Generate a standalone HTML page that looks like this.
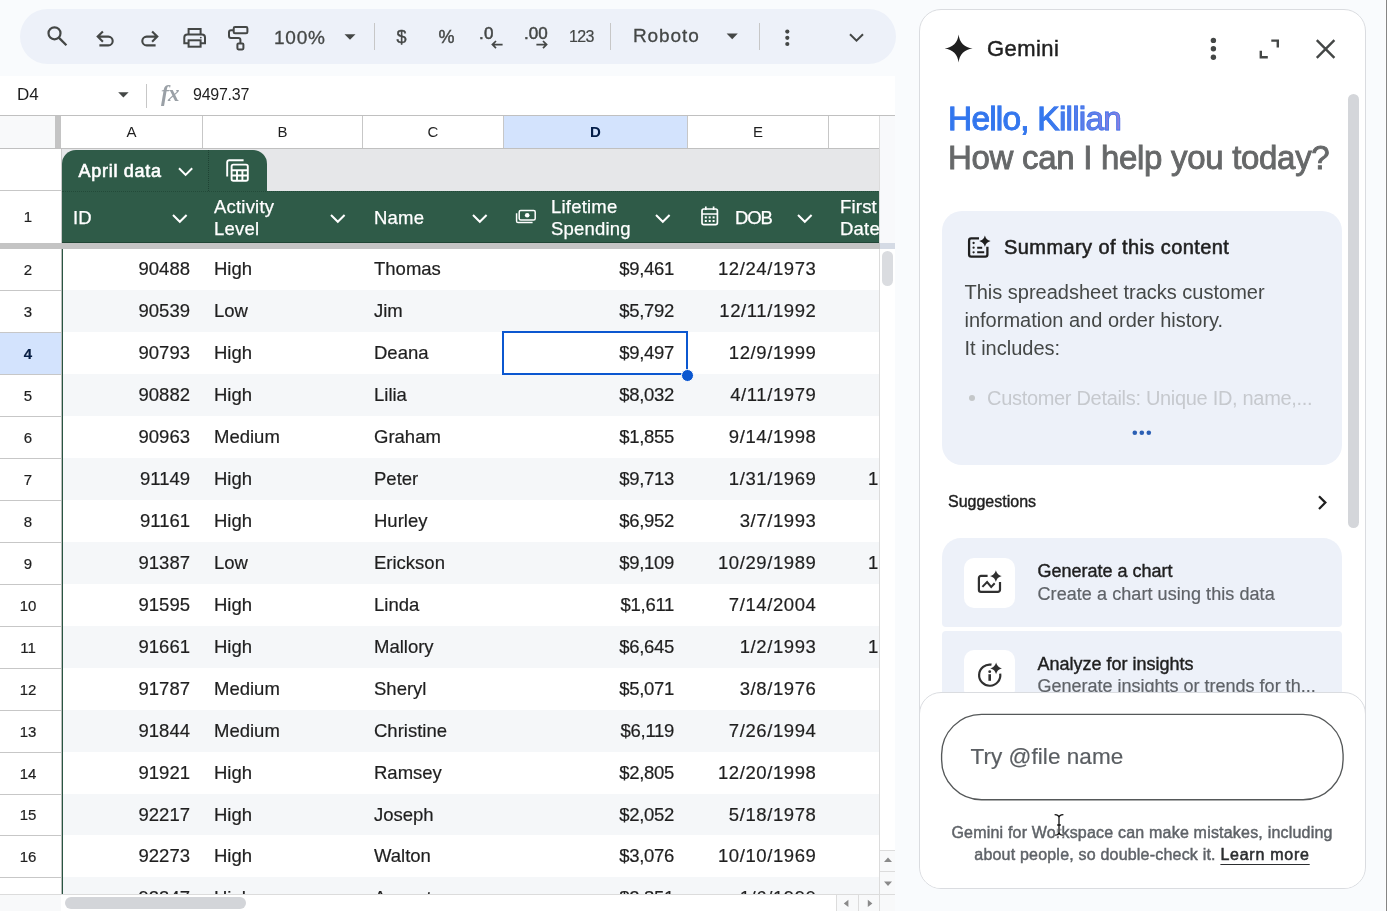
<!DOCTYPE html>
<html>
<head>
<meta charset="utf-8">
<title>Sheets</title>
<style>
*{box-sizing:border-box;margin:0;padding:0}
html,body{width:1387px;height:911px;overflow:hidden;background:#f9fbfd;font-family:"Liberation Sans",sans-serif;color:#1f1f1f}
.abs{position:absolute}
#root{position:relative;width:1387px;height:911px;overflow:hidden;will-change:transform}
/* toolbar */
#tb{left:20px;top:9px;width:876px;height:55px;border-radius:28px;background:#edf1f9}
.tbt{position:absolute;color:#444746;white-space:nowrap}
.sep{position:absolute;width:1px;background:#c7c7c7;top:22.5px;height:27px}
/* formula bar */
#fb{left:0;top:76px;width:895px;height:39px;background:#fff}
/* grid */
#grid{left:0;top:115px;width:895px;height:796px;background:#fff;overflow:hidden}
.ch{position:absolute;top:1px;height:32px;background:#fff;border-right:1px solid #c7c7c7;font-size:15px;line-height:32px;text-align:center;color:#1f1f1f}
.rh{position:absolute;left:0;width:61px;padding-right:5px;height:42px;border-bottom:1px solid #c7c7c7;background:#fff;font-size:15px;text-align:center;line-height:41px;color:#1f1f1f;-webkit-text-stroke:0.2px #1f1f1f}
.row{position:absolute;left:63px;width:816px;height:42px;font-size:18.5px;-webkit-text-stroke:0.2px #1f1f1f;line-height:42px;color:#1f1f1f}
.row.b{background:#f5f7f9}
.row span{position:absolute;top:0;white-space:nowrap}
.cA{right:689px}
.cB{left:151px}
.cC{left:311px}
.cD{right:205px;letter-spacing:-0.3px}
.cE{right:62.5px;letter-spacing:0.6px}
.cF{left:805px}
.hd{position:absolute;color:#fff;font-size:18.5px;line-height:22px;white-space:nowrap;letter-spacing:0.2px;-webkit-text-stroke:0.25px #fff;margin-top:1px}
/* gemini */
#gem{left:919px;top:9px;width:447px;height:880px;border:1px solid #dadce0;border-radius:22px;background:#fff;overflow:hidden}
.card{position:absolute;left:22px;width:400px;background:#edf1f9}
</style>
</head>
<body>
<div id="root">

<!-- TOOLBAR -->
<div id="tb" class="abs"></div>
<svg class="abs" style="left:0;top:0" width="900" height="70" viewBox="0 0 900 70" fill="none" stroke="#444746" stroke-width="2" stroke-linecap="butt" stroke-linejoin="miter">
  <!-- search -->
  <circle cx="54.5" cy="33.3" r="6.0" stroke-width="2.2"/>
  <path d="M58.8 37.6 L66.4 45.2" stroke-width="2.3"/>
  <!-- undo -->
  <path d="M102.9 31.4 L97.7 36.6 L102.9 41.8 M98.2 36.6 H108.3 a4.4 4.4 0 0 1 0 8.800 H99.4" stroke-width="2.1"/>
  <!-- redo -->
  <path d="M152.100 31.400 L157.300 36.600 L152.100 41.800 M156.800 36.600 H146.700 a4.400 4.400 0 0 0 0 8.800 H155.600" stroke-width="2.1"/>
  <!-- print -->
  <path d="M188.6 34.5 V29 H200.6 V34.5" />
  <path d="M188.6 43.3 H184.3 V37.5 a3 3 0 0 1 3 -3 H202 a3 3 0 0 1 3 3 V43.3 H200.6" />
  <rect x="188.6" y="40.3" width="12" height="6.4"/>
  <circle cx="200.8" cy="37.6" r="0.9" fill="#444746" stroke="none"/>
  <!-- paint format -->
  <rect x="233.700" y="27.100" width="13.700" height="6.200" rx="1.300"/>
  <path d="M233.700 30.200 H231 a2 2 0 0 0 -2 2 V36 a2 2 0 0 0 2 2 H238.4 a2 2 0 0 1 2 2 V43"/>
  <rect x="237.400" y="43.400" width="6" height="6" rx="1.100"/>
  <!-- zoom dropdown tri -->
  <path d="M344.5 34.3 H355.5 L350 39.8 Z" fill="#444746" stroke="none"/>
  <!-- decimal arrows -->
  <path d="M502.6 44.6 H492.4 M496 41 L492.4 44.6 L496 48.2" stroke-width="1.7"/>
  <path d="M536.4 44.6 H546.6 M543 41 L546.6 44.6 L543 48.2" stroke-width="1.7"/>
  <!-- font dropdown tri -->
  <path d="M726.6 33.6 H737.8 L732.2 39.2 Z" fill="#444746" stroke="none"/>
  <!-- more -->
  <circle cx="787.3" cy="31.6" r="2.1" fill="#444746" stroke="none"/>
  <circle cx="787.3" cy="37.8" r="2.1" fill="#444746" stroke="none"/>
  <circle cx="787.3" cy="44" r="2.1" fill="#444746" stroke="none"/>
  <!-- chevron -->
  <path d="M850 34.2 L856.5 40.7 L863 34.2" stroke-width="2"/>
</svg>
<div class="sep" style="left:374px"></div>
<div class="sep" style="left:610px"></div>
<div class="sep" style="left:759px"></div>
<div class="tbt" style="left:274px;top:26.300px;font-size:19px;line-height:24px;letter-spacing:0.8px;-webkit-text-stroke:0.3px #444746">100%</div>
<div class="tbt" style="left:396.5px;top:25px;font-size:18px;line-height:24px;-webkit-text-stroke:0.4px #444746">$</div>
<div class="tbt" style="left:438.500px;top:25px;font-size:18px;line-height:24px;-webkit-text-stroke:0.4px #444746">%</div>
<div class="tbt" style="left:479px;top:22px;font-size:17px;line-height:24px;-webkit-text-stroke:0.5px #444746;letter-spacing:0.3px">.0</div>
<div class="tbt" style="left:524px;top:22px;font-size:17px;line-height:24px;-webkit-text-stroke:0.5px #444746;letter-spacing:0px">.00</div>
<div class="tbt" style="left:569px;top:25px;font-size:16px;line-height:24px;letter-spacing:-0.6px;-webkit-text-stroke:0.2px #444746">123</div>
<div class="tbt" style="left:633px;top:24.4px;font-size:19px;line-height:24px;letter-spacing:0.9px;-webkit-text-stroke:0.3px #444746">Roboto</div>

<!-- FORMULA BAR -->
<div id="fb" class="abs">
  <div class="abs" style="left:17px;top:8px;font-size:17px;line-height:22px;color:#1f1f1f">D4</div>
  <svg class="abs" style="left:116px;top:14px" width="16" height="12" viewBox="0 0 16 12"><path d="M2.2 2.2 H12.6 L7.4 7.6 Z" fill="#444746"/></svg>
  <div class="abs" style="left:146px;top:8px;width:1px;height:24px;background:#c7c7c7"></div>
  <div class="abs" style="left:161px;top:5px;font-family:'Liberation Serif',serif;font-style:italic;font-size:23px;line-height:26px;color:#9aa0a6;letter-spacing:-0.6px;font-weight:bold">fx</div>
  <div class="abs" style="left:193px;top:8px;font-size:16px;line-height:22px;color:#1f1f1f;letter-spacing:-0.25px">9497.37</div>
</div>

<!-- GRID -->
<div id="grid" class="abs">
<div class="abs" style="left:0;top:0;width:895px;height:1px;background:#c0c0c0"></div>
<div class="abs" style="left:0;top:1px;width:55px;height:32px;background:#f8f9fa"></div>
<div class="abs" style="left:55px;top:1px;width:6px;height:33px;background:#c4c4c4"></div>
<div class="ch" style="left:61px;width:142px;">A</div>
<div class="ch" style="left:203px;width:160px;">B</div>
<div class="ch" style="left:363px;width:141px;">C</div>
<div class="ch" style="left:504px;width:184px;background:#d3e3fd;font-weight:bold;color:#041e49;">D</div>
<div class="ch" style="left:688px;width:141px;">E</div>
<div class="ch" style="left:829px;width:51px;"></div>
<div class="abs" style="left:0;top:33px;width:880px;height:1px;background:#c0c0c0"></div>
<div class="abs" style="left:0;top:34px;width:61px;height:42px;background:#fff;border-bottom:1px solid #c7c7c7"></div>
<div class="abs" style="left:61px;top:34px;width:819px;height:42px;background:#e6e7e9"></div>
<div class="abs" style="left:60.5px;top:34px;width:1px;height:94px;background:#c9c9c9"></div>
<div class="abs" style="left:62px;top:35px;width:205px;height:41px;background:#2f5b48;border-radius:14px 14px 0 0"></div>
<div class="abs" style="left:208px;top:35px;width:0;height:41px;border-left:1px dotted #1f4233"></div>
<div class="abs" style="left:78.5px;top:44px;font-size:18px;line-height:22px;color:#fff;letter-spacing:0.72px;-webkit-text-stroke:0.6px #fff;margin-top:1px;white-space:nowrap">April data</div>
<svg class="abs" style="left:176px;top:50px" width="20" height="14" viewBox="0 0 20 14" fill="none" stroke="#fff" stroke-width="2"><path d="M3 3.3 L9.6 9.9 L16.2 3.3"/></svg>
<svg class="abs" style="left:224px;top:42px" width="28" height="28" viewBox="0 0 28 28" fill="none" stroke="#fff" stroke-width="1.9">
<path d="M3.2 19.5 V5.2 a2 2 0 0 1 2 -2 H19.6"/>
<rect x="7.6" y="7.6" width="16.2" height="16.2" rx="1.8"/>
<path d="M7.6 13.2 H23.8 M7.6 18.5 H23.8 M13 13.2 V23.8 M18.4 13.2 V23.8"/>
</svg>
<div class="rh" style="top:76px;height:52px;line-height:51px;border-bottom:none">1</div>
<div class="abs" style="left:62px;top:75.5px;width:818px;height:52.5px;background:#2f5b48;border-bottom:1px solid #214535"></div>
<div class="abs" style="left:62px;top:75.5px;width:818px;height:0;border-top:1px dotted #234a39"></div>
<div class="hd" style="left:73px;top:91px">ID</div>
<svg class="abs" style="left:169.5px;top:96.5px" width="20" height="14" viewBox="0 0 20 14" fill="none" stroke="#fff" stroke-width="2"><path d="M3 3 L9.8 9.8 L16.6 3"/></svg>
<div class="hd" style="left:214px;top:80px">Activity<br>Level</div>
<svg class="abs" style="left:328px;top:96.5px" width="20" height="14" viewBox="0 0 20 14" fill="none" stroke="#fff" stroke-width="2"><path d="M3 3 L9.8 9.8 L16.6 3"/></svg>
<div class="hd" style="left:374px;top:91px">Name</div>
<svg class="abs" style="left:470px;top:96.5px" width="20" height="14" viewBox="0 0 20 14" fill="none" stroke="#fff" stroke-width="2"><path d="M3 3 L9.8 9.8 L16.6 3"/></svg>
<div class="hd" style="left:551px;top:80px">Lifetime<br>Spending</div>
<svg class="abs" style="left:653px;top:96.5px" width="20" height="14" viewBox="0 0 20 14" fill="none" stroke="#fff" stroke-width="2"><path d="M3 3 L9.8 9.8 L16.6 3"/></svg>
<div class="hd" style="left:735px;top:91px;letter-spacing:-1.1px">DOB</div>
<svg class="abs" style="left:794.5px;top:96.5px" width="20" height="14" viewBox="0 0 20 14" fill="none" stroke="#fff" stroke-width="2"><path d="M3 3 L9.8 9.8 L16.6 3"/></svg>
<div class="hd" style="left:840px;top:80px;width:40px;overflow:hidden">First<br>Date</div>
<svg class="abs" style="left:514px;top:92px" width="24" height="20" viewBox="0 0 24 20" fill="none" stroke="#fff" stroke-width="1.5">
<rect x="5.2" y="3.6" width="16" height="9.4" rx="1.5"/><circle cx="13.2" cy="8.3" r="2.3" fill="#fff" stroke="none"/>
<path d="M2.6 6.2 V14.2 a1.4 1.4 0 0 0 1.4 1.4 H18.6"/></svg>
<svg class="abs" style="left:699px;top:89px" width="22" height="24" viewBox="0 0 22 24" fill="none" stroke="#fff" stroke-width="1.7">
<rect x="3" y="5" width="15.4" height="15.6" rx="1.8"/><path d="M3 10 H18.4 M6.8 2.6 V6 M14.6 2.6 V6"/>
<g fill="#fff" stroke="none"><rect x="5.8" y="12.4" width="2" height="2"/><rect x="9.7" y="12.4" width="2" height="2"/><rect x="13.6" y="12.4" width="2" height="2"/><rect x="5.8" y="16" width="2" height="2"/><rect x="9.7" y="16" width="2" height="2"/><rect x="13.6" y="16" width="2" height="2"/></g></svg>
<div class="abs" style="left:0;top:128px;width:880px;height:6px;background:#c4c4c4"></div>
<div class="abs" style="left:880px;top:1px;width:16px;height:127px;background:#f8f9fb"></div><div class="abs" style="left:879px;top:1px;width:1px;height:127px;background:#dcdcdc"></div><div class="abs" style="left:880px;top:128px;width:16px;height:6px;background:#d5dbe5"></div>
<div class="rh" style="top:134px;height:42px;line-height:41px;">2</div>
<div class="row" style="top:133px;height:42px;line-height:42px"><span class="cA">90488</span><span class="cB">High</span><span class="cC">Thomas</span><span class="cD">$9,461</span><span class="cE">12/24/1973</span><span class="cF"></span></div>
<div class="rh" style="top:176px;height:42px;line-height:41px;">3</div>
<div class="row b" style="top:175px;height:42px;line-height:42px"><span class="cA">90539</span><span class="cB">Low</span><span class="cC">Jim</span><span class="cD">$5,792</span><span class="cE">12/11/1992</span><span class="cF"></span></div>
<div class="rh" style="top:218px;height:42px;line-height:41px;background:#d3e3fd;font-weight:bold;color:#041e49;">4</div>
<div class="row" style="top:217px;height:42px;line-height:42px"><span class="cA">90793</span><span class="cB">High</span><span class="cC">Deana</span><span class="cD">$9,497</span><span class="cE">12/9/1999</span><span class="cF"></span></div>
<div class="rh" style="top:260px;height:42px;line-height:41px;">5</div>
<div class="row b" style="top:259px;height:42px;line-height:42px"><span class="cA">90882</span><span class="cB">High</span><span class="cC">Lilia</span><span class="cD">$8,032</span><span class="cE">4/11/1979</span><span class="cF"></span></div>
<div class="rh" style="top:302px;height:42px;line-height:41px;">6</div>
<div class="row" style="top:301px;height:42px;line-height:42px"><span class="cA">90963</span><span class="cB">Medium</span><span class="cC">Graham</span><span class="cD">$1,855</span><span class="cE">9/14/1998</span><span class="cF"></span></div>
<div class="rh" style="top:344px;height:42px;line-height:41px;">7</div>
<div class="row b" style="top:343px;height:42px;line-height:42px"><span class="cA">91149</span><span class="cB">High</span><span class="cC">Peter</span><span class="cD">$9,713</span><span class="cE">1/31/1969</span><span class="cF">1</span></div>
<div class="rh" style="top:386px;height:42px;line-height:41px;">8</div>
<div class="row" style="top:385px;height:42px;line-height:42px"><span class="cA">91161</span><span class="cB">High</span><span class="cC">Hurley</span><span class="cD">$6,952</span><span class="cE">3/7/1993</span><span class="cF"></span></div>
<div class="rh" style="top:428px;height:42px;line-height:41px;">9</div>
<div class="row b" style="top:427px;height:42px;line-height:42px"><span class="cA">91387</span><span class="cB">Low</span><span class="cC">Erickson</span><span class="cD">$9,109</span><span class="cE">10/29/1989</span><span class="cF">1</span></div>
<div class="rh" style="top:470px;height:42px;line-height:41px;">10</div>
<div class="row" style="top:469px;height:42px;line-height:42px"><span class="cA">91595</span><span class="cB">High</span><span class="cC">Linda</span><span class="cD">$1,611</span><span class="cE">7/14/2004</span><span class="cF"></span></div>
<div class="rh" style="top:512px;height:42px;line-height:41px;">11</div>
<div class="row b" style="top:511px;height:42px;line-height:42px"><span class="cA">91661</span><span class="cB">High</span><span class="cC">Mallory</span><span class="cD">$6,645</span><span class="cE">1/2/1993</span><span class="cF">1</span></div>
<div class="rh" style="top:554px;height:42px;line-height:41px;">12</div>
<div class="row" style="top:553px;height:42px;line-height:42px"><span class="cA">91787</span><span class="cB">Medium</span><span class="cC">Sheryl</span><span class="cD">$5,071</span><span class="cE">3/8/1976</span><span class="cF"></span></div>
<div class="rh" style="top:596px;height:42px;line-height:41px;">13</div>
<div class="row b" style="top:595px;height:42px;line-height:42px"><span class="cA">91844</span><span class="cB">Medium</span><span class="cC">Christine</span><span class="cD">$6,119</span><span class="cE">7/26/1994</span><span class="cF"></span></div>
<div class="rh" style="top:638px;height:42px;line-height:41px;">14</div>
<div class="row" style="top:637px;height:42px;line-height:42px"><span class="cA">91921</span><span class="cB">High</span><span class="cC">Ramsey</span><span class="cD">$2,805</span><span class="cE">12/20/1998</span><span class="cF"></span></div>
<div class="rh" style="top:680px;height:41px;line-height:40px;">15</div>
<div class="row b" style="top:679px;height:41px;line-height:41px"><span class="cA">92217</span><span class="cB">High</span><span class="cC">Joseph</span><span class="cD">$2,052</span><span class="cE">5/18/1978</span><span class="cF"></span></div>
<div class="rh" style="top:721px;height:42px;line-height:41px;">16</div>
<div class="row" style="top:720px;height:42px;line-height:42px"><span class="cA">92273</span><span class="cB">High</span><span class="cC">Walton</span><span class="cD">$3,076</span><span class="cE">10/10/1969</span><span class="cF"></span></div>
<div class="rh" style="top:763px;height:42px;line-height:41px;">17</div>
<div class="row b" style="top:762px;height:42px;line-height:42px"><span class="cA">92347</span><span class="cB">High</span><span class="cC">Augustus</span><span class="cD">$2,851</span><span class="cE">1/6/1990</span><span class="cF"></span></div>
<div class="abs" style="left:62px;top:134px;width:1px;height:650px;background:#2a5542"></div>
<div class="abs" style="left:61px;top:134px;width:1px;height:650px;background:#b9bcbb"></div>
<div class="abs" style="left:502px;top:216px;width:186px;height:44px;border:2px solid #0b57d0"></div>
<div class="abs" style="left:681px;top:253.5px;width:13px;height:13px;border-radius:50%;background:#0b57d0;border:1px solid #fff"></div>
<div class="abs" style="left:879px;top:134px;width:17px;height:646px;background:#fff;border-left:1px solid #dcdcdc"></div>
<div class="abs" style="left:882px;top:136px;width:11px;height:35px;border-radius:5.5px;background:#dadce0"></div>
<div class="abs" style="left:880px;top:735px;width:16px;height:45px;background:#f8f9fa;border-top:1px solid #dcdcdc"></div>
<div class="abs" style="left:880px;top:756px;width:16px;height:1px;background:#dcdcdc"></div>
<svg class="abs" style="left:880px;top:736px" width="16" height="44" viewBox="0 0 16 44"><path d="M4 11 L8 6.6 L12 11 Z M4 30.6 L12 30.6 L8 35 Z" fill="#8a8a8a"/></svg>
<div class="abs" style="left:0;top:779px;width:896px;height:17px;background:#fff;border-top:1px solid #dcdcdc"></div>
<div class="abs" style="left:0;top:780px;width:61px;height:16px;background:#f8f9fa"></div>
<div class="abs" style="left:65px;top:782px;width:181px;height:12px;border-radius:6px;background:#d3d5d9"></div>
<div class="abs" style="left:836px;top:780px;width:44px;height:16px;background:#f8f9fa;border-left:1px solid #dcdcdc;border-right:1px solid #dcdcdc"></div>
<div class="abs" style="left:858px;top:780px;width:1px;height:16px;background:#dcdcdc"></div>
<svg class="abs" style="left:836px;top:780px" width="44" height="16" viewBox="0 0 44 16"><path d="M12.4 4.8 L7.8 8.4 L12.4 12 Z M31.8 4.8 L36.4 8.4 L31.8 12 Z" fill="#8a8a8a"/></svg>
<div class="abs" style="left:880px;top:780px;width:16px;height:16px;background:#f8f9fa"></div>
</div>

<!-- GEMINI -->
<div id="gem" class="abs">
<div class="abs" id="gi" style="left:-920px;top:-10px;width:1387px;height:911px">
  <!-- header -->
  <svg class="abs" style="left:944px;top:34px" width="30" height="30" viewBox="0 0 30 30"><path d="M14.6 0.6 C15.4 8.6 20.6 13.8 28.6 14.6 C20.6 15.4 15.4 20.6 14.6 28.6 C13.8 20.6 8.6 15.4 0.6 14.6 C8.6 13.8 13.8 8.6 14.6 0.6 Z" fill="#1f1f1f"/></svg>
  <div class="abs" style="left:987px;top:35px;font-size:22px;line-height:28px;color:#1f1f1f;letter-spacing:0.45px;-webkit-text-stroke:0.45px #1f1f1f">Gemini</div>
  <svg class="abs" style="left:1200px;top:30px" width="150" height="40" viewBox="1200 30 150 40" fill="none" stroke="#444746" stroke-width="2.4">
    <circle cx="1213.4" cy="40.4" r="2.7" fill="#444746" stroke="none"/>
    <circle cx="1213.4" cy="48.8" r="2.7" fill="#444746" stroke="none"/>
    <circle cx="1213.4" cy="57.2" r="2.7" fill="#444746" stroke="none"/>
    <path d="M1271.3 40.6 H1277.8 V47.5 M1260.8 50.7 V57.3 H1267.8"/>
    <path d="M1316.8 40.2 L1334.4 57.8 M1334.4 40.2 L1316.8 57.8"/>
  </svg>
  <!-- scrollbar -->
  <div class="abs" style="left:1348px;top:94px;width:11px;height:434px;border-radius:5.5px;background:#d4d6da"></div>
  <!-- greeting -->
  <div class="abs" id="hello" style="left:948px;top:98px;font-size:33.5px;line-height:42px;letter-spacing:-0.8px;white-space:nowrap;background:linear-gradient(90deg,#3076ee 0%,#3478ee 58%,#8c7fe0 100%);-webkit-background-clap:text;-webkit-background-clip:text;background-clip:text;color:transparent;-webkit-text-stroke:0.9px rgba(58,120,238,0.8)">Hello, Killian</div>
  <div class="abs" id="how" style="left:948px;top:137px;font-size:33px;line-height:42px;letter-spacing:-0.3px;white-space:nowrap;color:#666869;-webkit-text-stroke:0.9px #666869">How can I help you today?</div>
  <!-- summary card -->
  <div class="abs" style="left:942px;top:211px;width:400px;height:254px;border-radius:20px;background:#edf1f9"></div>
  <svg class="abs" style="left:960px;top:228px" width="40" height="40" viewBox="960 228 40 40" fill="none" stroke="#1f1f1f" stroke-width="2.3">
    <path d="M979 238.4 H971.2 a2.1 2.1 0 0 0 -2.100 2.100 V254.600 a2.100 2.100 0 0 0 2.100 2.100 H985.300 a2.100 2.100 0 0 0 2.100 -2.100 V246.800"/>
    <path d="M977.200 247.700 H982.200 M977.200 252.300 H984.200" stroke-width="2"/>
    <g fill="#1f1f1f" stroke="none"><circle cx="973.600" cy="243" r="1.150"/><circle cx="973.600" cy="247.700" r="1.150"/><circle cx="973.600" cy="252.300" r="1.150"/>
    <path d="M984.90 235.40 C985.98 238.72 987.28 240.02 990.60 241.10 C987.28 242.18 985.98 243.48 984.90 246.80 C983.82 243.48 982.52 242.18 979.20 241.10 C982.52 240.02 983.82 238.72 984.90 235.40 Z"/></g>
  </svg>
  <div class="abs" id="sumt" style="left:1004px;top:234px;font-size:20px;line-height:26px;color:#1f1f1f;white-space:nowrap;letter-spacing:0.42px;-webkit-text-stroke:0.55px #1f1f1f">Summary of this content</div>
  <div class="abs" id="sumb" style="left:964.5px;top:278px;font-size:20px;line-height:28px;color:#444746;white-space:nowrap">This spreadsheet tracks customer<br>information and order history.<br>It includes:</div>
  <div class="abs" style="left:969px;top:395.4px;width:6px;height:6px;border-radius:50%;background:#c4c7c9"></div>
  <div class="abs" id="bul" style="left:987px;top:384px;font-size:20px;line-height:28px;color:#c6c9ce;white-space:nowrap;letter-spacing:-0.31px">Customer Details: Unique ID, name,...</div>
  <svg class="abs" style="left:1128px;top:426px" width="28" height="14" viewBox="0 0 28 14"><circle cx="6.8" cy="6.8" r="2.3" fill="#2b5fb4"/><circle cx="13.8" cy="6.8" r="2.3" fill="#2b5fb4"/><circle cx="20.8" cy="6.8" r="2.3" fill="#2b5fb4"/></svg>
  <!-- suggestions -->
  <div class="abs" id="sugg" style="left:948px;top:491px;font-size:16px;line-height:22px;color:#1f1f1f;white-space:nowrap;-webkit-text-stroke:0.4px #1f1f1f">Suggestions</div>
  <svg class="abs" style="left:1312px;top:492px" width="20" height="22" viewBox="0 0 20 22" fill="none" stroke="#1f1f1f" stroke-width="2.2"><path d="M7 4.2 L13.4 10.6 L7 17"/></svg>
  <!-- suggestion cards -->
  <div class="abs" style="left:942px;top:538px;width:400px;height:89px;border-radius:19px 19px 4px 4px;background:#edf1f9"></div>
  <div class="abs" style="left:942px;top:630.500px;width:400px;height:88.500px;border-radius:4px;background:#edf1f9"></div>
  <div class="abs" style="left:964px;top:557.700px;width:50.700px;height:50px;border-radius:10px;background:#fff"></div>
  <div class="abs" style="left:964px;top:650px;width:50.700px;height:50px;border-radius:10px;background:#fff"></div>
  <svg class="abs" style="left:970px;top:562px" width="40" height="40" viewBox="970 562 40 40" fill="none" stroke="#303030" stroke-width="2.2">
    <path d="M987.600 575.900 H981 a2.100 2.100 0 0 0 -2.100 2.100 V589.800 a2.100 2.100 0 0 0 2.100 2.100 H997.900 a2.100 2.100 0 0 0 2.100 -2.100 V582"/>
    <path d="M982.400 586.900 L987.100 582 L991.200 586.900 L994.700 583.300" stroke-width="2"/>
    <path d="M995.90 570.20 C997.02 573.63 998.37 574.98 1001.80 576.10 C998.37 577.22 997.02 578.57 995.90 582.00 C994.78 578.57 993.43 577.22 990.00 576.10 C993.43 574.98 994.78 573.63 995.90 570.20 Z" fill="#303030" stroke="none"/>
  </svg>
  <svg class="abs" style="left:970px;top:655px" width="40" height="40" viewBox="970 655 40 40" fill="none" stroke="#303030" stroke-width="2.2">
    <path d="M991.500 664.700 A10.600 10.600 0 1 0 1000.200 673.600"/>
    <path d="M989.700 674.200 V680.800" stroke-width="2.600"/><circle cx="989.700" cy="671.700" r="1.400" fill="#303030" stroke="none"/>
    <path d="M996.10 662.40 C997.22 665.83 998.57 667.18 1002.00 668.30 C998.57 669.42 997.22 670.77 996.10 674.20 C994.98 670.77 993.63 669.42 990.20 668.30 C993.63 667.18 994.98 665.83 996.10 662.40 Z" fill="#303030" stroke="none"/>
  </svg>
  <div class="abs" id="s1t" style="left:1037.5px;top:559.3px;font-size:18px;line-height:24px;color:#1f1f1f;white-space:nowrap;-webkit-text-stroke:0.4px #1f1f1f">Generate a chart</div>
  <div class="abs" id="s1b" style="left:1037.5px;top:581.5px;font-size:18px;line-height:24px;color:#5f6368;white-space:nowrap;letter-spacing:0.07px;-webkit-text-stroke:0.2px #5f6368">Create a chart using this data</div>
  <div class="abs" id="s2t" style="left:1037.5px;top:651.800px;font-size:18px;line-height:24px;color:#1f1f1f;white-space:nowrap;-webkit-text-stroke:0.4px #1f1f1f">Analyze for insights</div>
  <div class="abs" id="s2b" style="left:1037.5px;top:673.800px;font-size:18px;line-height:24px;color:#5f6368;white-space:nowrap;-webkit-text-stroke:0.2px #5f6368">Generate insights or trends for th...</div>
  <!-- bottom overlay -->
  <div class="abs" style="left:919px;top:691.5px;width:447px;height:198px;border:1px solid #dadce0;border-radius:22px;background:#fff"></div>
  <svg class="abs" style="left:935px;top:708px" width="416" height="100" viewBox="935 708 416 100"><rect x="941.6" y="714.4" width="401.5" height="85.3" rx="40" fill="#fff" stroke="#555859" stroke-width="1.35"/></svg>
  <div class="abs" id="try" style="left:970.5px;top:742px;font-size:22.5px;line-height:30px;color:#5a5e62;white-space:nowrap;letter-spacing:0.05px;-webkit-text-stroke:0.2px #5a5e62">Try @file name</div>
  <div class="abs" id="disc" style="left:942px;top:822px;width:400px;text-align:center;font-size:16px;line-height:22.3px;color:#5f6368;white-space:nowrap;letter-spacing:0.2px;-webkit-text-stroke:0.45px #5f6368">Gemini for Workspace can make mistakes, including<br>about people, so double-check it. <span style="color:#2c2e30;-webkit-text-stroke:0.55px #2c2e30;letter-spacing:0.75px;text-decoration:underline;text-underline-offset:3.5px;text-decoration-thickness:1.4px">Learn more</span></div>
  <!-- cursor -->
  <svg class="abs" style="left:1053px;top:812.500px" width="12" height="24" viewBox="0 0 12 24" fill="none"><g stroke="#fff" stroke-width="3" opacity="0.85"><path d="M1.600 1.600 C4.200 1.600 6 2.600 6 4.800 C6 2.600 7.800 1.600 10.400 1.600 M6 4.800 V19 M1.600 22.200 C4.200 22.200 6 21.200 6 19 C6 21.200 7.800 22.200 10.400 22.200 M4 12 H8"/></g><g stroke="#111" stroke-width="1.300"><path d="M1.600 1.600 C4.200 1.600 6 2.600 6 4.800 C6 2.600 7.800 1.600 10.400 1.600 M6 4.800 V19 M1.600 22.200 C4.200 22.200 6 21.200 6 19 C6 21.200 7.800 22.200 10.400 22.200 M4.200 12 H7.800"/></g></svg>
</div>
</div>

<div class="abs" style="left:1385px;top:0;width:1px;height:911px;background:#fdfdfd"></div><div class="abs" style="left:1386px;top:0;width:1px;height:911px;background:#858585"></div>
</div>
</body>
</html>
